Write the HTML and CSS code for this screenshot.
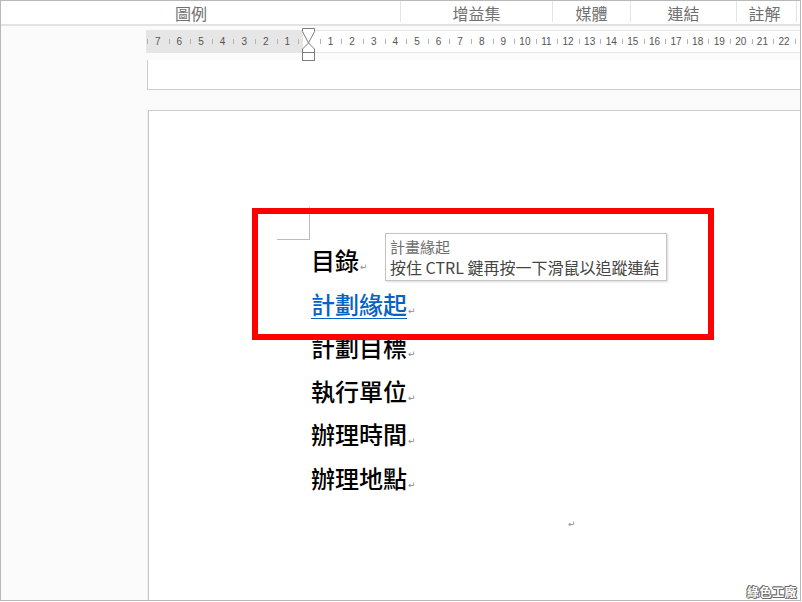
FILE: index.html
```html
<!DOCTYPE html>
<html lang="zh-Hant">
<head>
<meta charset="utf-8">
<title>計劃緣起</title>
<link rel="stylesheet" href="styles.css">
</head>
<body>
<div class="frame">
  <div class="tabs">
    <div class="tab t1">圖例</div>
    <div class="tab t2">增益集</div>
    <div class="tab t3">媒體</div>
    <div class="tab t4">連結</div>
    <div class="tab t5">註解</div>
    <div class="tab t6"></div>
  </div>
  <div class="ruler">
    <span class="cell">7</span><span class="cell">6</span><span class="cell">5</span><span class="cell">4</span><span class="cell">3</span><span class="cell">2</span><span class="cell">1</span><span class="cell"></span><span class="cell">1</span><span class="cell">2</span><span class="cell">3</span><span class="cell">4</span><span class="cell">5</span><span class="cell">6</span><span class="cell">7</span><span class="cell">8</span><span class="cell">9</span><span class="cell">10</span><span class="cell">11</span><span class="cell">12</span><span class="cell">13</span><span class="cell">14</span><span class="cell">15</span><span class="cell">16</span><span class="cell">17</span><span class="cell">18</span><span class="cell">19</span><span class="cell">20</span><span class="cell">21</span><span class="cell">22</span><span class="cell last"></span>
    <svg class="indent" width="14" height="35" viewBox="0 0 14 35">
      <polygon points="0.5,1.5 12.5,1.5 12.5,4.5 6.5,16 0.5,4.5" fill="#fff" stroke="#7d7d7d" stroke-width="1"/>
      <polygon points="6.5,16 12.5,22 12.5,25.5 0.5,25.5 0.5,22" fill="#fff" stroke="#7d7d7d" stroke-width="1"/>
      <rect x="0.5" y="25.5" width="12" height="8" fill="#fff" stroke="#7d7d7d" stroke-width="1"/>
    </svg>
  </div>
  <div class="prev-page"></div>
  <div class="page">
    <div class="lines">
      <p class="line">目錄<span class="pm">↵</span></p>
      <p class="line"><span class="link">計劃緣起</span><span class="pm">↵</span></p>
      <p class="line">計劃目標<span class="pm">↵</span></p>
      <p class="line">執行單位<span class="pm">↵</span></p>
      <p class="line">辦理時間<span class="pm">↵</span></p>
      <p class="line">辦理地點<span class="pm">↵</span></p>
      <div class="stray">↵</div>
    </div>
  </div>
  <div class="highlight"></div>
  <div class="tooltip">
    <div class="tip-title">計畫緣起</div>
    <div class="tip-text">按住 CTRL 鍵再按一下滑鼠以追蹤連結</div>
  </div>
  <div class="watermark">綠色工廠</div>
</div>
</body>
</html>
```
FILE: styles.css
```css
html, body {
  margin: 0;
  padding: 0;
  background: #ffffff;
}

.frame {
  position: relative;
  width: 801px;
  height: 601px;
  box-sizing: border-box;
  border: 1px solid #b9b9b9;
  background: #fbfbfb;
  display: flex;
  flex-direction: column;
  overflow: hidden;
  font-family: "Noto Sans CJK TC", "Noto Sans", sans-serif;
}

/* top tab strip */
.tabs {
  display: flex;
  align-items: flex-start;
  height: 23px;
  background: #ffffff;
  border-bottom: 2px solid #e3e3e3;
  flex: 0 0 auto;
}

.tab {
  box-sizing: border-box;
  height: 21px;
  line-height: 24px;
  font-size: 16px;
  color: #707070;
  text-align: center;
  white-space: nowrap;
}

.t1 { width: 399px; padding-right: 19px; }
.t2 { width: 152px; border-left: 1px solid #e4e4e4; }
.t3 { width: 78px; border-left: 1px solid #e4e4e4; }
.t4 { width: 106px; border-left: 1px solid #e4e4e4; }
.t5 { width: 60px; border-left: 1px solid #e4e4e4; padding-right: 4px; }
.t6 { flex: 1; border-left: 1px solid #e4e4e4; }

/* ruler */
.ruler {
  position: relative;
  display: flex;
  height: 23px;
  box-sizing: border-box;
  margin: 4px 0 0 145px;
  padding-left: 1px;
  border-top: 1px solid #e6e6e6;
  border-bottom: 1px solid #e6e6e6;
  background: linear-gradient(to right, #e6e6e6 0, #e6e6e6 157px, #ffffff 157px);
  flex: 0 0 auto;
}

.cell {
  flex: 0 0 21.6px;
  text-align: center;
  font-family: "Liberation Sans", Arial, sans-serif;
  font-size: 10px;
  line-height: 21px;
  color: #555555;
  background: linear-gradient(#b3b3b3, #b3b3b3) left center / 1px 5px no-repeat;
}

.cell.last {
  flex: 1 1 auto;
}

.indent {
  position: absolute;
  left: 156px;
  top: -4px;
}

/* previous page bottom */
.prev-page {
  flex: 0 0 auto;
  height: 29px;
  margin: 7px 0 0 146px;
  background: #ffffff;
  border-left: 1px solid #cdcdcd;
  border-bottom: 1px solid #cdcdcd;
}

/* current page */
.page {
  flex: 1 1 auto;
  margin: 20px 0 0 147px;
  background: #ffffff;
  border-top: 1px solid #cdcdcd;
  border-left: 1px solid #c6c6c6;
  box-shadow: -1px 0 0 #ececec;
  padding: 127px 0 0 162px;
}

.lines {
  position: relative;
}

.lines::before {
  content: "";
  position: absolute;
  left: -34px;
  top: -31px;
  width: 32px;
  height: 32px;
  border-right: 1px solid #bcbcbc;
  border-bottom: 1px solid #bcbcbc;
}

.line {
  margin: 0;
  height: 43.6px;
  font-size: 24px;
  line-height: 43.6px;
  font-weight: 500;
  color: #000000;
  white-space: nowrap;
}

.link {
  color: #0563c1;
  text-decoration: underline;
  text-decoration-thickness: 1px;
  text-underline-offset: 4px;
}

.pm {
  font-family: "DejaVu Sans", sans-serif;
  font-size: 9px;
  line-height: 1;
  font-weight: 400;
  color: #8a8a8a;
  margin-left: 1px;
}

.stray {
  margin: 18px 0 0 257px;
  font-family: "DejaVu Sans", sans-serif;
  font-size: 9px;
  line-height: 12px;
  color: #8a8a8a;
}

/* overlays */
.highlight {
  position: absolute;
  left: 251px;
  top: 207px;
  width: 450px;
  height: 120px;
  border: 6px solid #ff0000;
}

.tooltip {
  position: absolute;
  left: 384px;
  top: 232px;
  width: 282px;
  height: 48px;
  box-sizing: border-box;
  padding: 3px 3px 0 4px;
  background: #ffffff;
  border: 1px solid #c4c4c4;
  box-shadow: 1px 1px 2px rgba(0, 0, 0, 0.15);
  font-size: 16px;
  white-space: nowrap;
}

.tip-title {
  height: 20px;
  line-height: 20px;
  font-size: 15px;
  color: #6e6e6e;
}

.tip-text {
  height: 21px;
  line-height: 21px;
  color: #444444;
}

.watermark {
  position: absolute;
  right: 3px;
  bottom: 1px;
  font-size: 12px;
  line-height: 14px;
  font-weight: 700;
  color: #ffffff;
  letter-spacing: 0.5px;
  text-shadow: 1px 0 0 #6a6a6a, -1px 0 0 #6a6a6a, 0 1px 0 #6a6a6a, 0 -1px 0 #6a6a6a, 1px 1px 0 #6a6a6a, -1px -1px 0 #6a6a6a;
}
```
